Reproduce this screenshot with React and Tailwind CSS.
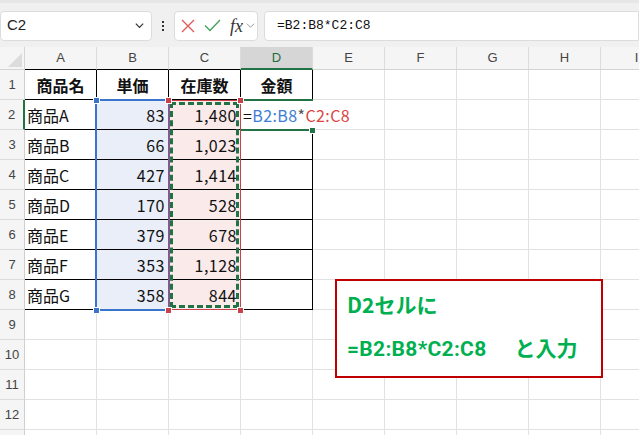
import React from 'react';

const cols = ['A', 'B', 'C', 'D', 'E', 'F', 'G', 'H', 'I'];

const data = [
  ['商品名', '単価', '在庫数', '金額'],
  ['商品A', '83', '1,480', ''],
  ['商品B', '66', '1,023', ''],
  ['商品C', '427', '1,414', ''],
  ['商品D', '170', '528', ''],
  ['商品E', '379', '678', ''],
  ['商品F', '353', '1,128', ''],
  ['商品G', '358', '844', ''],
];

const jp = { fontFamily: '"Noto Sans CJK JP", "Liberation Sans", sans-serif' };

function Handle({ x, y, color }) {
  return (
    <div
      className={`absolute w-[7px] h-[7px] border border-white ${color}`}
      style={{ left: x - 3, top: y - 3 }}
    />
  );
}

function Toolbar() {
  return (
    <div className="h-[47px] bg-[#f0f0f0] border-t-[3px] border-[#e6e6e6] flex items-center gap-[6px] pt-[1px]">
      <div className="w-[152px] h-[30px] bg-white border border-[#dcdcdc] rounded-[4px] flex items-center justify-between pl-[6px] pr-[6px]">
        <span className="text-[15px] text-[#222]" style={{ fontFamily: '"Liberation Sans", sans-serif' }}>C2</span>
        <svg width="11" height="11" viewBox="0 0 12 12" fill="none" stroke="#333" strokeWidth="1.3">
          <path d="M2 4l4 4 4-4" />
        </svg>
      </div>
      <div className="w-[10px] flex flex-col items-center gap-[2px]">
        <div className="w-[2px] h-[2px] bg-[#333]" />
        <div className="w-[2px] h-[2px] bg-[#333]" />
        <div className="w-[2px] h-[2px] bg-[#333]" />
      </div>
      <div className="w-[84px] h-[30px] bg-white border border-[#dcdcdc] rounded-[4px] flex items-center pl-[6px] gap-[9px]">
        <svg width="14" height="14" viewBox="0 0 14 14" stroke="#e25a5a" strokeWidth="1.4">
          <path d="M1 1l12 12M13 1L1 13" />
        </svg>
        <svg width="17" height="13" viewBox="0 0 17 13" fill="none" stroke="#43a35c" strokeWidth="1.4">
          <path d="M1 6.5l5 5L16 1" />
        </svg>
        <div className="flex items-center gap-[3px]">
          <span className="text-[18px] italic text-[#333] leading-none" style={{ fontFamily: '"Liberation Serif", serif' }}>fx</span>
          <svg width="9" height="9" viewBox="0 0 10 10" fill="none" stroke="#999" strokeWidth="1.1">
            <path d="M1 3l4 4 4-4" />
          </svg>
        </div>
      </div>
      <div className="flex-1 h-[30px] bg-white border border-[#dcdcdc] rounded-l-[4px] flex items-center pl-[12px]">
        <span className="text-[13px] text-[#111]" style={{ fontFamily: '"Liberation Mono", monospace' }}>=B2:B8*C2:C8</span>
      </div>
    </div>
  );
}

function HeaderRow() {
  return (
    <div className="flex h-[23px] bg-[#f5f5f5]">
      <div className="w-[25px] shrink-0 border-r border-b border-[#d4d4d4] relative">
        <svg className="absolute right-[2px] bottom-[2px]" width="14" height="14" viewBox="0 0 14 14">
          <path d="M14 0L14 14L0 14Z" fill="#dcdcdc" />
        </svg>
      </div>
      {cols.map((c) => (
        <div
          key={c}
          className={`w-[72px] shrink-0 flex items-center justify-center text-[13px] border-r border-[#dcdcdc] ${
            c === 'D'
              ? 'bg-[#d6d6d6] text-[#1e6b3f] border-b-2 border-b-[#217346]'
              : c <= 'C'
              ? 'text-[#444] border-b border-b-black'
              : 'text-[#444] border-b border-b-[#d4d4d4]'
          }`}
          style={{ fontFamily: '"Liberation Sans", sans-serif' }}
        >
          {c}
        </div>
      ))}
    </div>
  );
}

function Row({ n }) {
  const rowData = data[n - 1];
  return (
    <div className="flex h-[30px]">
      <div
        className={`w-[25px] shrink-0 bg-[#f5f5f5] flex items-center justify-center text-[13px] text-[#444] border-b border-[#dcdcdc] ${
          n === 2 ? 'border-r-2 border-r-[#217346]' : 'border-r border-r-[#cfcfcf]'
        }`}
        style={{ fontFamily: '"Liberation Sans", sans-serif' }}
      >
        {n <= 12 ? n : ''}
      </div>
      {cols.map((c, i) => {
        const inTable = rowData && i < 4;
        let bg = 'bg-white';
        if (n >= 2 && n <= 8 && c === 'B') bg = 'bg-[#e9eef8]';
        if (n >= 2 && n <= 8 && c === 'C') bg = 'bg-[#faeaea]';
        const value = inTable ? rowData[i] : '';
        const header = n === 1;
        const editing = n === 2 && c === 'D';
        const align = header
          ? 'justify-center font-bold'
          : i === 0 || editing
          ? 'justify-start pl-[2px]'
          : 'justify-end pr-[3px]';
        return (
          <div
            key={c}
            className={`w-[72px] shrink-0 flex items-center text-[16px] text-[#111] border-r border-b ${bg} ${align} ${
              inTable ? 'border-black' : 'border-[#e1e1e1]'
            } ${editing ? 'overflow-visible border-r-transparent' : ''}`}
            style={jp}
          >
            {editing ? (
              <span className="whitespace-nowrap relative z-20 tracking-[0.4px]" style={jp}>
                <span className="text-[#111]">=</span>
                <span className="text-[#3d7dd8]">B2:B8</span>
                <span className="text-[#555]">*</span>
                <span className="text-[#d9443f]">C2:C8</span>
              </span>
            ) : (
              <span className={i > 0 && !header ? 'tracking-[0.5px]' : ''}>{value}</span>
            )}
          </div>
        );
      })}
    </div>
  );
}

export default function App() {
  const rows = [1, 2, 3, 4, 5, 6, 7, 8, 9, 10, 11, 12, 13];
  return (
    <div className="w-[639px] h-[435px] overflow-hidden bg-white">
      <Toolbar />
      <div className="relative">
        <HeaderRow />
        {rows.map((n) => (
          <Row key={n} n={n} />
        ))}

        {/* B2:B8 range */}
        <div className="absolute left-[95px] top-[52px] w-[75px] h-[212px] border-2 border-[#3b74cc] pointer-events-none" />
        {/* C2:C8 range */}
        <div className="absolute left-[168px] top-[53px] w-[73px] h-[210px] border border-[#c9414a] pointer-events-none" />
        <div className="absolute left-[170px] top-[55px] w-[69px] h-[206px] border-[3px] border-dashed border-[#217346] pointer-events-none" />

        {/* D2 active cell */}
        <div className="absolute left-[241px] top-[52px] w-[72px] h-[32px] border-y-2 border-[#217346] pointer-events-none" />

        <Handle x={96} y={53} color="bg-[#3b74cc]" />
        <Handle x={96} y={263} color="bg-[#3b74cc]" />
        <Handle x={168} y={53} color="bg-[#c9414a]" />
        <Handle x={240} y={53} color="bg-[#c9414a]" />
        <Handle x={168} y={263} color="bg-[#c9414a]" />
        <Handle x={240} y={263} color="bg-[#c9414a]" />
        <Handle x={312} y={83} color="bg-[#217346]" />

        {/* callout */}
        <div
          className="absolute left-[335px] top-[232px] w-[268px] h-[99px] bg-white border-2 border-[#c00000] pl-[10px] pt-[9px] text-[#00b050] font-bold text-[21px]"
          style={jp}
        >
          <div className="leading-[28px]">D2セルに</div>
          <div className="leading-[28px] mt-[15px] whitespace-nowrap">
            <span className="tracking-[0.3px]" style={{ fontFamily: '"Roboto", "Liberation Sans", sans-serif' }}>=B2:B8*C2:C8</span>
            <span className="ml-[28px]">と入力</span>
          </div>
        </div>
      </div>
    </div>
  );
}
